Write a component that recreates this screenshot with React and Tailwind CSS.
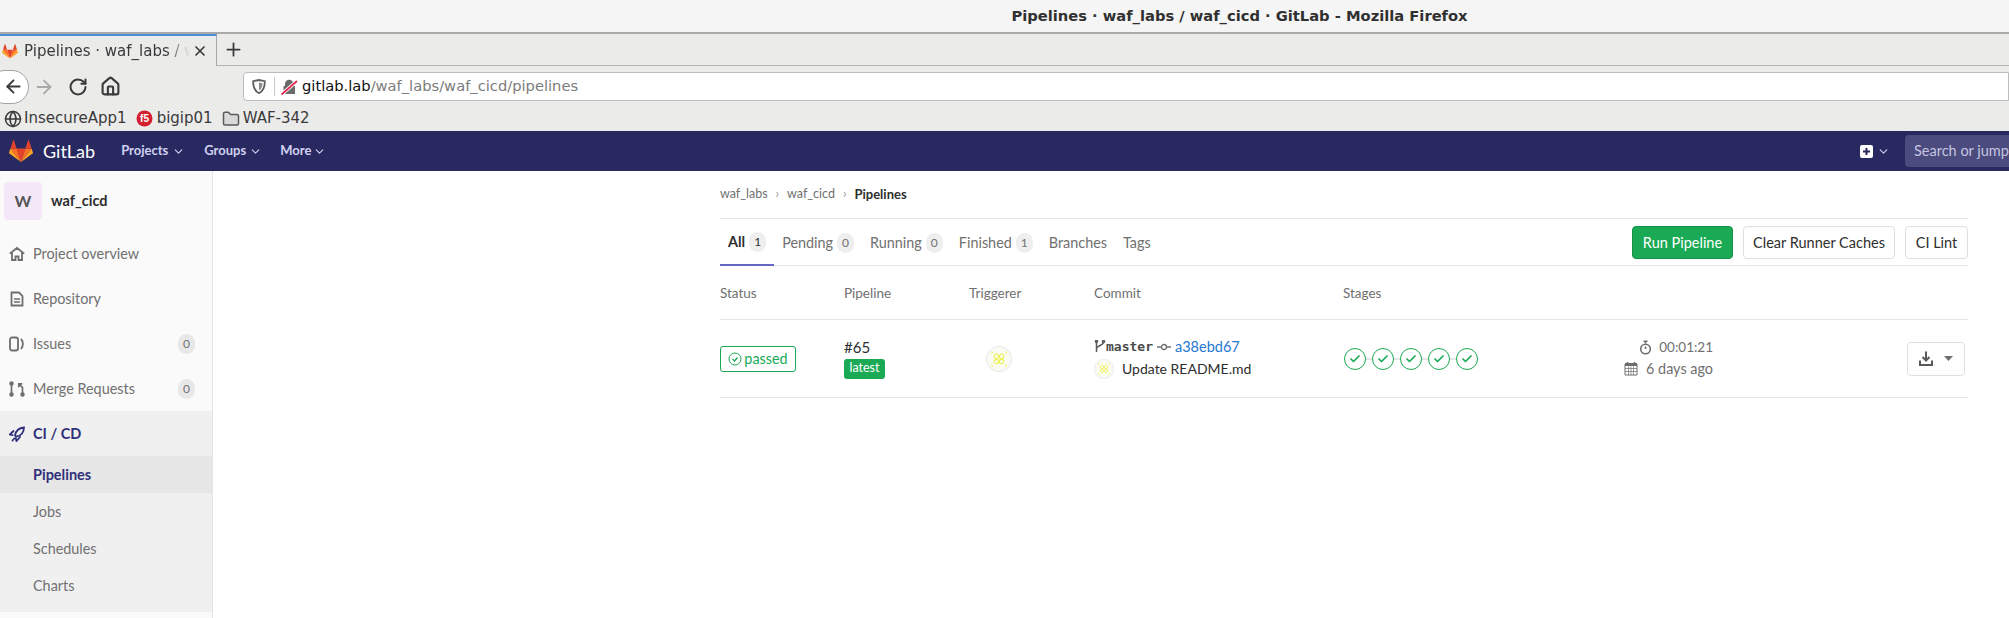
import React from "react";
import { ArrowLeft, ArrowRight, RotateCw, House, Globe, Folder, ChevronDown, X, Plus, Check } from "lucide-react";

function Tanuki({ size = 24 }) {
  return (
    <svg width={size} height={size * 0.92} viewBox="0 0 36 33" className="shrink-0">
      <path d="M18 33 24.6 12.6H11.4Z" fill="#e24329" />
      <path d="M18 33 11.4 12.6H2.1Z" fill="#fc6d26" />
      <path d="M2.1 12.6.1 18.8c-.2.6 0 1.2.5 1.5L18 33Z" fill="#fca326" />
      <path d="M2.1 12.6H11.4L7.4.4c-.2-.6-1-.6-1.2 0Z" fill="#e24329" />
      <path d="M18 33 24.6 12.6H33.9Z" fill="#fc6d26" />
      <path d="M33.9 12.6 35.9 18.8c.2.6 0 1.2-.5 1.5L18 33Z" fill="#fca326" />
      <path d="M33.9 12.6H24.6L28.6.4c.2-.6 1-.6 1.2 0Z" fill="#e24329" />
    </svg>
  );
}

function Identicon({ size }) {
  return (
    <svg width={size} height={size} viewBox="0 0 26 26" className="shrink-0">
      <circle cx="13" cy="13" r="12.5" fill="#fbfbf6" stroke="#e6e6e6" />
      <g fill="none" stroke="#eef25f" strokeWidth="1.2">
        <circle cx="10.4" cy="10.4" r="2.2" />
        <circle cx="15.6" cy="10.4" r="2.2" />
        <circle cx="10.4" cy="15.6" r="2.2" />
        <circle cx="15.6" cy="15.6" r="2.2" />
      </g>
      <path d="M5 5.5h3L5.500 8.5ZM21 5.5h-3l2.500 3ZM5 20.5h3l-2.500-3ZM21 20.5h-3l2.500-3Z" fill="#f1f49a" />
    </svg>
  );
}

function SideIcon({ name }) {
  if (name === "home") {
    return (
      <svg width="16" height="16" viewBox="0 0 16 16" className="shrink-0" fill="none" stroke="#6e6e6e" strokeWidth="1.8">
        <path d="M.8 7.6 8 2l7.2 5.6M3 6.5V14h3.5v-3.5h3V14H13V6.5" />
      </svg>
    );
  }
  if (name === "doc") {
    return (
      <svg width="16" height="16" viewBox="0 0 16 16" className="shrink-0" fill="none" stroke="#6e6e6e" strokeWidth="1.8">
        <path d="M2.5 1.5h7.5l3.5 3.5v9.5h-11Z" />
        <path d="M5 8h6M5 11h6" strokeWidth="1.5" />
      </svg>
    );
  }
  if (name === "issues") {
    return (
      <svg width="16" height="16" viewBox="0 0 16 16" className="shrink-0" fill="none" stroke="#6e6e6e" strokeWidth="1.8">
        <rect x="1" y="1.5" width="8" height="13" rx="2" />
        <path d="M12 3c2.500 2.500 2.500 7.5 0 10" />
      </svg>
    );
  }
  if (name === "merge") {
    return (
      <svg width="16" height="16" viewBox="0 0 16 16" className="shrink-0" fill="none" stroke="#6e6e6e" strokeWidth="1.7">
        <circle cx="2.5" cy="13.5" r="1.4" fill="#6e6e6e" />
        <circle cx="2.5" cy="2.5" r="1.4" fill="#6e6e6e" />
        <circle cx="13.5" cy="13.5" r="1.4" fill="#6e6e6e" />
        <path d="M2.5 3v9M13.5 12V6.5L10 3.2M9.800 6.2V2.800h3.500" />
      </svg>
    );
  }
  // feather shaped CI/CD rocket
  return (
    <svg width="16" height="16" viewBox="0 0 16 16" className="shrink-0" fill="none" stroke="#2f2f7a" strokeWidth="1.8">
      <path d="M15 1.5C10.500 1.8 7 4 6 9.5l1.200 1.200C12.500 9.800 14.800 6.500 15 1.5Z" />
      <path d="M4.500 5 .8 8.5l2.700.7M11 11 7.500 15l-.7-2.800M3.500 14.500l1.800-2" strokeLinecap="round" />
    </svg>
  );
}

function SideItem({ icon, label, count }) {
  return (
    <div className="flex h-[45px] items-center pl-[9px] pr-[17px] text-[14.4px] text-[#707070]">
      <SideIcon name={icon} />
      <span className="ml-[8px] flex-1">{label}</span>
      {count !== undefined && <span className="flex h-[20px] w-[17px] items-center justify-center rounded-full bg-[#e8e8e8] text-[12px]">{count}</span>}
    </div>
  );
}

function Tab({ label, count, active }) {
  return (
    <div className={`flex h-[47px] items-center px-[8px] text-[14.4px] ${active ? "border-b-2 border-[#6666c4] font-bold text-[#2e2e2e]" : "text-[#707070]"}`}>
      <span>{label}</span>
      {count !== undefined && (
        <span className={`ml-[4px] flex h-[20px] w-[17px] items-center justify-center rounded-full bg-[#eeeeee] text-[12px] ${active ? "font-normal text-[#303030]" : ""}`}>{count}</span>
      )}
    </div>
  );
}

function StageDot() {
  return (
    <span className="flex h-[22px] w-[22px] items-center justify-center rounded-full border border-[#1aaa55] bg-white">
      <Check size={12} strokeWidth={3.5} color="#1aaa55" />
    </span>
  );
}

function StageLink() {
  return <span className="h-[2px] w-[6px] bg-[#e5e5e5]" />;
}

export default function App() {
  return (
    <div className="flex h-[618px] w-[2009px] flex-col overflow-hidden bg-white font-['Lato',sans-serif]">
      {/* window title */}
      <div className="flex h-[32px] shrink-0 items-center justify-center bg-[#f5f5f5] pl-[470px] font-['DejaVu_Sans',sans-serif] text-[14.7px] font-bold text-[#303030]">
        Pipelines · waf_labs / waf_cicd · GitLab - Mozilla Firefox
      </div>

      {/* browser chrome */}
      <div className="flex h-[99px] shrink-0 flex-col border-t-2 border-[#a9a9a9] bg-[#ebebea] font-['DejaVu_Sans',sans-serif] text-[#3a3a3a]">
        <div className="flex h-[32px] shrink-0 items-stretch border-b border-[#b3b3b3]">
          <div className="-mb-px flex w-[217px] items-center border-r border-[#a8a8a8] border-t-2 border-t-[#4a90d9] bg-[#ebebea] pl-[2px]">
            <Tanuki size={16} />
            <span className="ml-[6px] w-[166px] overflow-hidden whitespace-nowrap text-[15px] [mask-image:linear-gradient(to_right,black_86%,transparent)]">Pipelines · waf_labs / waf_cicd</span>
            <X size={16} strokeWidth={2.5} className="ml-[2px] shrink-0" />
          </div>
          <Plus size={21} className="ml-[6px] self-center" />
        </div>
        <div className="-mt-px flex h-[43px] shrink-0 items-center">
          <div className="-ml-[12px] flex h-[34px] w-[41px] shrink-0 items-center justify-center rounded-full border border-[#a3a3a3] bg-white pl-[10px]">
            <ArrowLeft size={21} strokeWidth={2.2} />
          </div>
          <ArrowRight size={22} color="#a9a9a9" className="ml-[4px]" />
          <RotateCw size={20} strokeWidth={2.4} className="ml-[13px]" />
          <House size={21} strokeWidth={2.4} className="ml-[12px]" />
          <div className="ml-[122px] flex h-[29px] flex-1 items-center rounded-l-[4px] border border-[#bdbdbd] bg-white pl-[8px] text-[14.7px]">
            <svg width="14" height="15" viewBox="0 0 14 15" fill="none" className="shrink-0">
              <path d="M1.200 2.200 7 1l5.800 1.200c.2 5.500-1.500 9.800-5.800 12-4.300-2.200-6-6.500-5.800-12Z" stroke="#5f5f5f" strokeWidth="1.8" />
              <path d="M7 3.500 10.500 4.200C10.500 7.500 9.500 10 7 11.500Z" fill="#8a8a8a" />
            </svg>
            <span className="ml-[8px] h-[19px] w-px bg-[#c9c9c9]" />
            <svg width="17" height="16" viewBox="0 0 17 16" className="ml-[6px] shrink-0">
              <path d="M4 7V5a4.200 4.200 0 0 1 8.400 0v2H14v8H2.500V7Z" fill="#6a6a6a" />
              <path d="M.5 15.500 16 2" stroke="#fff" strokeWidth="3.5" />
              <path d="M.5 15.500 16 2" stroke="#e22850" strokeWidth="1.8" />
            </svg>
            <span className="ml-[4px] text-[#111]">gitlab.lab</span>
            <span className="text-[#7c7c7c]">/waf_labs/waf_cicd/pipelines</span>
          </div>
        </div>
        <div className="-mt-[2px] flex flex-1 items-center pl-[4px] text-[15px]">
          <Globe size={18} />
          <span className="ml-[2px]">InsecureApp1</span>
          <svg width="17" height="17" viewBox="0 0 17 17" className="ml-[9px]">
            <circle cx="8.5" cy="8.5" r="8" fill="#d3202f" />
            <text x="8.5" y="12" textAnchor="middle" fontSize="10" fontWeight="700" fill="#fff" fontFamily="Liberation Sans">f5</text>
          </svg>
          <span className="ml-[4px]">bigip01</span>
          <Folder size={18} className="ml-[9px]" fill="#d9d9d9" color="#5a5a5a" />
          <span className="ml-[3px]">WAF-342</span>
        </div>
      </div>

      {/* gitlab navbar */}
      <div className="flex h-[40px] shrink-0 items-center bg-[#292961] pl-[9px] text-[#d1d1f0]">
        <Tanuki size={24} />
        <span className="ml-[10px] text-[18px] text-white">GitLab</span>
        <span className="ml-[26px] flex items-center text-[13px] font-bold">Projects<ChevronDown size={13} className="ml-[4px]" /></span>
        <span className="ml-[19px] flex items-center text-[13px] font-bold">Groups<ChevronDown size={13} className="ml-[3px]" /></span>
        <span className="ml-[18px] flex items-center text-[13px] font-bold">More<ChevronDown size={13} className="ml-[2px]" /></span>
        <div className="ml-auto flex items-center">
          <svg width="13" height="13" viewBox="0 0 13 13"><rect width="13" height="13" rx="2" fill="#fff" /><path d="M6.5 3v7M3 6.5h7" stroke="#292961" strokeWidth="2" /></svg>
          <ChevronDown size={13} className="ml-[4px]" />
          <div className="ml-[15px] flex h-[32px] w-[104px] shrink-0 items-center overflow-hidden whitespace-nowrap rounded-l-[4px] bg-[#4b4b7e] pl-[9px] text-[14.5px] text-[#c4c4e0]">Search or jump to…</div>
        </div>
      </div>

      <div className="flex min-h-0 flex-1">
        {/* sidebar */}
        <div className="w-[213px] shrink-0 border-r border-[#e5e5e5] bg-[#fafafa]">
          <div className="flex h-[60px] items-center pl-[4px]">
            <span className="flex h-[38px] w-[38px] items-center justify-center rounded-[4px] bg-[#f4e8f8] text-[16px] font-bold text-[#555]">W</span>
            <span className="ml-[9px] text-[14.5px] font-bold text-[#2e2e2e]">waf_cicd</span>
          </div>
          <SideItem icon="home" label="Project overview" />
          <SideItem icon="doc" label="Repository" />
          <SideItem icon="issues" label="Issues" count="0" />
          <SideItem icon="merge" label="Merge Requests" count="0" />
          <div className="bg-[#f0f0f0] pb-[8px]">
            <div className="flex h-[45px] items-center pl-[9px] text-[14.5px] font-bold text-[#2f2f7a]">
              <SideIcon name="rocket" />
              <span className="ml-[8px]">CI / CD</span>
            </div>
            <div className="flex h-[37px] items-center bg-[#e6e6e6] pl-[33px] text-[14.5px] font-bold text-[#2f2f7a]">Pipelines</div>
            <div className="flex h-[37px] items-center pl-[33px] text-[14.4px] text-[#707070]">Jobs</div>
            <div className="flex h-[37px] items-center pl-[33px] text-[14.4px] text-[#707070]">Schedules</div>
            <div className="flex h-[37px] items-center pl-[33px] text-[14.4px] text-[#707070]">Charts</div>
          </div>
        </div>

        {/* content */}
        <div className="ml-[507px] w-[1248px] shrink-0">
          <div className="flex h-[47px] items-center text-[12.5px] text-[#707070]">
            <span>waf_labs</span>
            <span className="mx-[8px] text-[#999]">›</span>
            <span>waf_cicd</span>
            <span className="mx-[8px] text-[#999]">›</span>
            <span className="text-[13px] font-bold text-[#2e2e2e]">Pipelines</span>
          </div>
          <div className="flex h-[48px] items-start justify-between border-y border-[#e5e5e5]">
            <div className="flex">
              <Tab label="All" count="1" active />
              <Tab label="Pending" count="0" />
              <Tab label="Running" count="0" />
              <Tab label="Finished" count="1" />
              <Tab label="Branches" />
              <Tab label="Tags" />
            </div>
            <div className="mt-[7px] flex gap-[10px] text-[14.5px] text-[#2e2e2e]">
              <button className="h-[33px] w-[101px] rounded-[4px] border border-[#168f48] bg-[#1aaa55] text-white">Run Pipeline</button>
              <button className="h-[33px] w-[152px] rounded-[4px] border border-[#dfdfdf] bg-white">Clear Runner Caches</button>
              <button className="h-[33px] w-[63px] rounded-[4px] border border-[#dfdfdf] bg-white">CI Lint</button>
            </div>
          </div>
          <div className="flex h-[54px] items-center border-b border-[#e5e5e5] pt-[2px] text-[13.5px] text-[#707070]">
            <span className="w-[124px]">Status</span>
            <span className="w-[125px]">Pipeline</span>
            <span className="w-[125px]">Triggerer</span>
            <span className="w-[249px]">Commit</span>
            <span>Stages</span>
          </div>
          <div className="flex h-[78px] items-center border-b border-[#e5e5e5] text-[14px] text-[#2e2e2e]">
            <div className="w-[124px]">
              <span className="flex h-[26px] w-[76px] items-center justify-center rounded-[3px] border border-[#1aaa55] text-[14.4px] text-[#1aaa55]">
                <svg width="14" height="14" viewBox="0 0 14 14" fill="none" stroke="#1aaa55" className="mr-[2px] shrink-0">
                  <circle cx="7" cy="7" r="6" />
                  <path d="m4.5 7 2 2 3-3.5" strokeWidth="1.3" />
                </svg>
                passed
              </span>
            </div>
            <div className="-mt-[2px] flex w-[125px] flex-col items-start">
              <span className="text-[15px] leading-[20px]">#65</span>
              <span className="mt-[2px] flex h-[20px] w-[41px] items-center justify-center rounded-[3px] bg-[#1aaa55] text-[12.5px] text-white">latest</span>
            </div>
            <div className="w-[125px] pl-[17px]">
              <Identicon size={26} />
            </div>
            <div className="-mt-[2px] flex w-[249px] flex-col">
              <div className="flex h-[20px] items-center">
                <svg width="12" height="13" viewBox="0 0 12 13" fill="none" stroke="#5a5a5a" strokeWidth="1.5">
                  <path d="M2.5 1v11M9.500 2c0 4-7 3-7 7" />
                  <circle cx="2.5" cy="1.5" r="1" />
                  <circle cx="9.500" cy="1.5" r="1" />
                </svg>
                <span className="font-['DejaVu_Sans_Mono',monospace] text-[13px] font-bold text-[#4a4a4a]">master</span>
                <svg width="14" height="10" viewBox="0 0 14 10" fill="none" stroke="#707070" strokeWidth="1.3" className="ml-[4px]">
                  <circle cx="7" cy="5" r="2.5" />
                  <path d="M0 5h4.500M9.500 5H14" />
                </svg>
                <span className="ml-[4px] text-[14.5px] text-[#1f78d1]">a38ebd67</span>
              </div>
              <div className="mt-[2px] flex h-[20px] items-center">
                <Identicon size={20} />
                <span className="ml-[8px]">Update README.md</span>
              </div>
            </div>
            <div className="flex w-[290px] items-center pl-px">
              <StageDot />
              <StageLink />
              <StageDot />
              <StageLink />
              <StageDot />
              <StageLink />
              <StageDot />
              <StageLink />
              <StageDot />
            </div>
            <div className="-mt-[2px] -ml-[4px] flex w-[84px] flex-col items-end text-[14.4px] text-[#707070]">
              <span className="flex h-[22px] items-center text-[13.5px]">
                <svg width="13" height="15" viewBox="0 0 13 15" fill="none" stroke="#6e6e6e" strokeWidth="1.6" className="mr-[7px] shrink-0">
                  <circle cx="6.5" cy="9" r="4.8" />
                  <path d="M4.500 1.200h4M6.500 1.500v2M6.500 6.500V9" />
                </svg>
                00:01:21
              </span>
              <span className="flex h-[20px] items-center whitespace-nowrap">
                <svg width="14" height="15" viewBox="0 0 14 15" fill="none" stroke="#6e6e6e" className="mr-[8px] shrink-0">
                  <path d="M1 3h12v11H1Z" />
                  <path d="M1 3.500h12" strokeWidth="3" />
                  <path d="M3.500 1v3M10.500 1v3" strokeWidth="1.5" />
                  <path d="M1 7.500h12M1 10.500h12M4.500 5.500V14M7 5.500V14M9.500 5.500V14" strokeWidth=".7" />
                </svg>
                6 days ago
              </span>
            </div>
            <div className="ml-[194px] flex h-[34px] w-[58px] shrink-0 items-center justify-center rounded-[4px] border border-[#dfdfdf]">
              <svg width="14" height="15" viewBox="0 0 14 15" fill="none" stroke="#5a5a5a" strokeWidth="2">
                <path d="M1 9.500V14h12V9.500" />
                <path d="M7 .5v8.500M3.500 6 7 9.500 10.500 6" />
              </svg>
              <svg width="9" height="5" viewBox="0 0 9 5" className="ml-[11px]"><path d="M0 0h9L4.500 5Z" fill="#6e6e6e" /></svg>
            </div>
          </div>
        </div>
      </div>
    </div>
  );
}
